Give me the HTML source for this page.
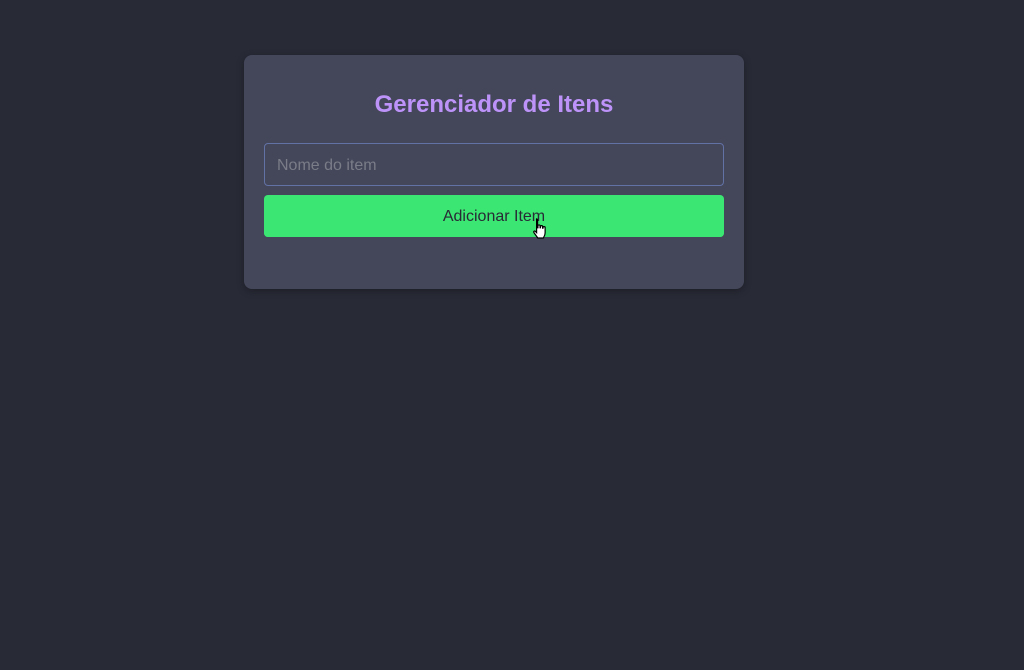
<!DOCTYPE html>
<html><head><style>
html,body{margin:0;padding:0;background:#282a36;width:1024px;height:670px;overflow:hidden;font-family:"Liberation Sans",Arial,sans-serif}
.card{position:absolute;left:244px;top:55px;width:500px;height:234px;background:#44475a;border-radius:8px;box-shadow:0 2px 8px rgba(0,0,0,.3)}
h1{position:absolute;left:244px;width:500px;top:90px;margin:0;text-align:center;font-size:24px;font-weight:bold;color:#bd93f9;line-height:30px}
.inp{position:absolute;left:264px;top:143px;width:458px;height:41px;border:1px solid #6272a4;border-radius:4px;background:#44475a;box-sizing:content-box}
.inp span{position:absolute;left:12px;top:13px;font-size:16px;color:#7a7c88;line-height:18px}
.btn{position:absolute;left:264px;top:196px;width:460px;height:41px;background:#3ce672;border-radius:4px;text-align:center;line-height:41px;font-size:16px;color:#282a36}
.bg{position:absolute;left:264px;top:195px;width:460px;height:42px;background:#3ce672;border-radius:4px}
</style></head><body>
<div class="card"></div>
<h1>Gerenciador de Itens</h1>
<div class="inp"><span>Nome do item</span></div>
<div class="bg"></div>
<div class="btn">Adicionar Item</div>
<svg style="position:absolute;left:531px;top:217px" width="22" height="24" viewBox="0 0 18 20"><path d="M4 1.5c.8 0 1.3.5 1.3 1.3V9h.3V7.2c0-.8 1.8-.8 1.8 0V9h.3V7.8c0-.8 1.8-.8 1.8 0V9.3h.3V8.6c0-.8 1.8-.8 1.8 0v4.6c0 2-1 3.3-1.5 4.3H5.5L2.3 13c-.6-.9.4-1.8 1.2-1L4.5 13V2.8c0-.8-.3-1.3-.5-1.3z" fill="#fff" stroke="#000" stroke-width="1"/></svg>
</body></html>
